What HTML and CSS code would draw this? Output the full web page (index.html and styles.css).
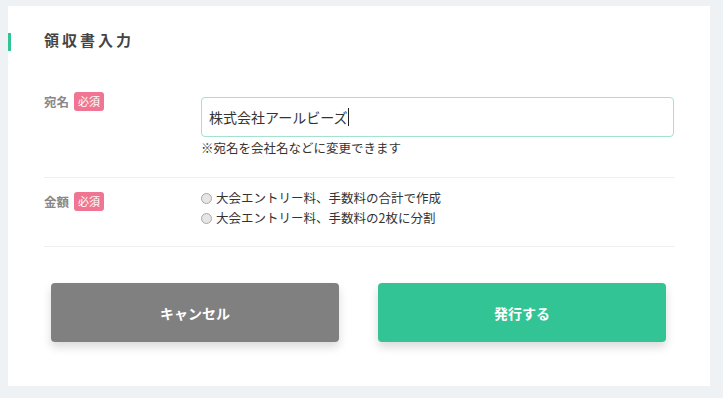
FILE: index.html
```html
<!DOCTYPE html>
<html lang="ja">
<head>
  <meta charset="UTF-8" />
  <title>領収書入力</title>
  <link rel="stylesheet" href="styles.css">
</head>
<body>
  <div class="card">
    <h2 class="title">領収書入力</h2>

    <div class="form-row row-name">
      <div class="label">宛名<span class="badge">必須</span></div>
      <div class="field">
        <div class="text-input"><span>株式会社アールビーズ</span><span class="caret"></span></div>
        <p class="hint">※宛名を会社名などに変更できます</p>
      </div>
    </div>

    <div class="form-row row-amount">
      <div class="label">金額<span class="badge">必須</span></div>
      <div class="field">
        <label class="option"><span class="radio"></span>大会エントリー料、手数料の合計で作成</label>
        <label class="option"><span class="radio"></span>大会エントリー料、手数料の2枚に分割</label>
      </div>
    </div>

    <div class="actions">
      <button class="btn btn-cancel">キャンセル</button>
      <button class="btn btn-issue">発行する</button>
    </div>
  </div>
</body>
</html>
```

FILE: styles.css
```css
body {
  margin: 6px 13px 0 8px;
  background-color: #eef2f5;
  font-family: "Noto Sans CJK JP", "Noto Sans", sans-serif;
  color: #333;
}
.card {
  background: #fff;
  padding: 27px 36px 44px 36px;
  height: 380px;
  box-sizing: border-box;
}
.title {
  margin: 0 0 41px -36px;
  padding: 0 0 4px 33px;
  border-left: 3px solid #33c495;
  font-size: 15px;
  line-height: 14px;
  letter-spacing: 3px;
  font-weight: bold;
  color: #444;
}
.form-row {
  display: flex;
  border-bottom: 1px solid #edf0f3;
}
.label {
  width: 157px;
  flex-shrink: 0;
  display: flex;
  align-items: center;
  height: 19px;
  font-size: 12.5px;
  font-weight: bold;
  color: #888;
}
.badge {
  display: inline-block;
  margin-left: 5px;
  width: 30px;
  height: 19px;
  line-height: 19px;
  text-align: center;
  border-radius: 3px;
  background: #f07592;
  color: #fff;
  font-size: 11px;
  font-weight: normal;
}
.field {
  flex: 1;
}
.row-name {
  padding-bottom: 20px;
}
.row-name .field {
  margin-top: 5px;
}
.text-input {
  height: 40px;
  box-sizing: border-box;
  border: 1px solid #a3e2cc;
  border-radius: 4px;
  padding: 0 7px;
  display: flex;
  align-items: center;
  font-size: 14px;
  color: #333;
}
.caret {
  display: inline-block;
  width: 1px;
  height: 18px;
  background: #222;
  margin-left: 1px;
}
.hint {
  margin: 2px 0 0;
  font-size: 12.5px;
  line-height: 18px;
}
.row-amount {
  padding: 10px 0 18px;
}
.row-amount .label {
  margin-top: 4px;
}
.option {
  display: flex;
  align-items: center;
  font-size: 12.5px;
  line-height: 20px;
}
.radio {
  width: 9px;
  height: 9px;
  border: 1px solid #a8a8a8;
  border-radius: 50%;
  background: #e6e6e6;
  margin-right: 4px;
}
.actions {
  display: grid;
  grid-template-columns: 1fr 1fr;
  gap: 39px;
  padding: 36px 8px 0 7px;
}
.btn {
  height: 59px;
  border: none;
  border-radius: 4px;
  color: #fff;
  font-family: inherit;
  font-size: 14px;
  font-weight: bold;
  box-shadow: 0 5px 10px rgba(0,0,0,0.15);
  cursor: pointer;
}
.btn-cancel {
  background: #808080;
}
.btn-issue {
  background: #33c495;
}
```
